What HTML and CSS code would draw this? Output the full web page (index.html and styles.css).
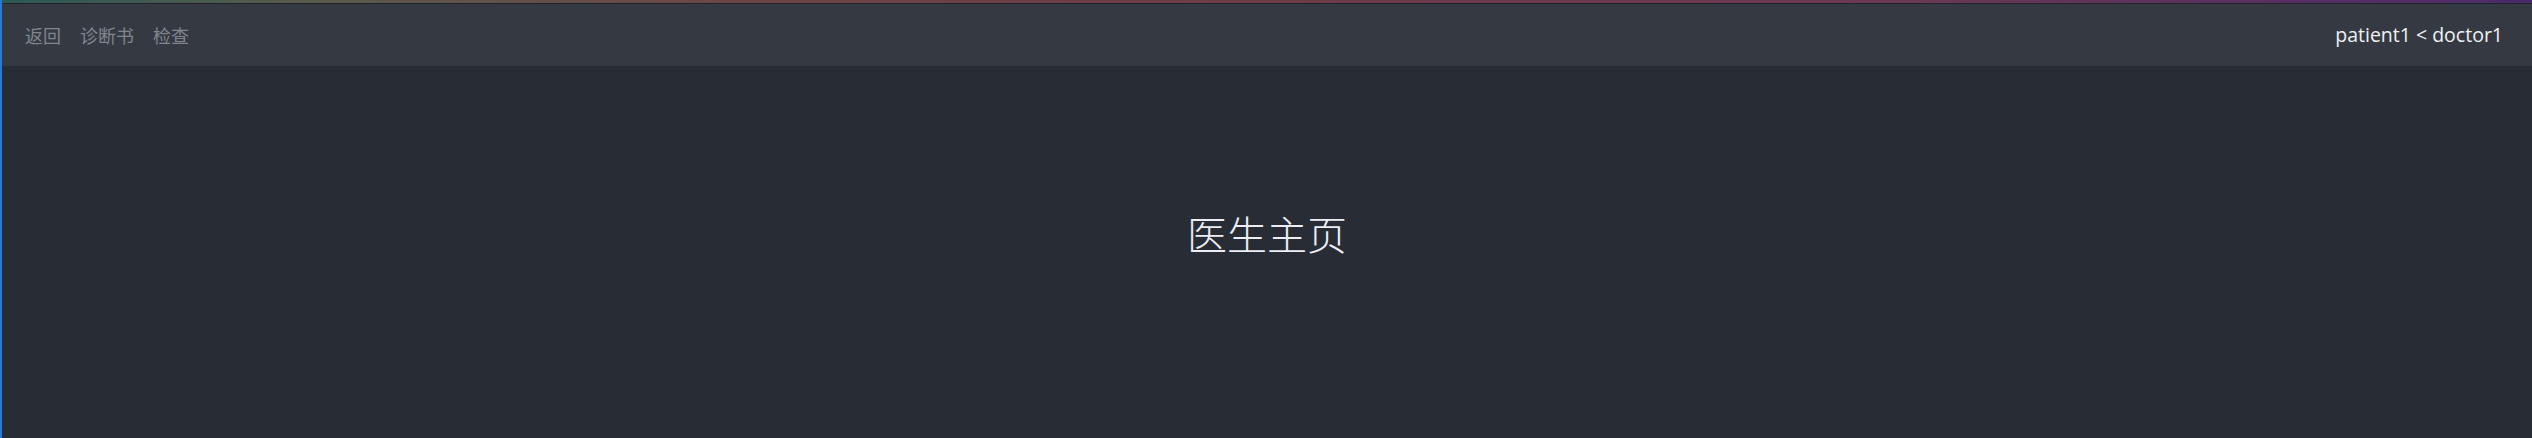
FILE: index.html
```html
<!DOCTYPE html>
<html lang="zh-CN">
<head>
<meta charset="utf-8">
<title>医生主页</title>
<link rel="stylesheet" href="styles.css">
</head>
<body>
<div class="app">
  <div class="topline"></div>
  <div class="divider"></div>
  <nav class="navbar">
    <div class="nav-links">
      <a class="nav-link" href="#">返回</a>
      <a class="nav-link" href="#">诊断书</a>
      <a class="nav-link" href="#">检查</a>
    </div>
    <div class="nav-user">patient1 &lt; doctor1</div>
  </nav>
  <main class="main">
    <h1 class="title">医生主页</h1>
  </main>
</div>
</body>
</html>
```
FILE: styles.css
```css
html, body {
  margin: 0;
  padding: 0;
  height: 100%;
  background: #282c34;
}
.app {
  min-height: 438px;
  height: 100%;
  box-sizing: border-box;
  border-left: 2px solid #2a78d6;
  display: flex;
  flex-direction: column;
  background: #282c34;
}
.topline {
  height: 3px;
  background: linear-gradient(90deg, #2c5954 0%, #585a4c 12%, #6c4448 30%, #6e3b48 50%, #6a3952 75%, #4a2a6a 100%);
}
.divider {
  height: 1px;
  background: #21252b;
}
.navbar {
  height: 62px;
  background: #353a42;
  display: flex;
  align-items: center;
  justify-content: space-between;
  padding: 0 29px 0 23px;
}
.nav-links {
  display: flex;
  gap: 19px;
}
.nav-link {
  color: #80858e;
  text-decoration: none;
  font-family: "Noto Sans CJK SC", sans-serif;
  font-size: 18px;
  line-height: 24px;
}
.nav-user {
  color: #eef0f2;
  font-family: "Open Sans", "Noto Sans", sans-serif;
  font-size: 19.5px;
  line-height: 24px;
}
.main {
  flex: 1;
  display: flex;
  justify-content: center;
  padding-top: 141px;
}
.title {
  margin: 0;
  color: #eceef4;
  font-family: "Noto Sans CJK SC", sans-serif;
  font-weight: 300;
  font-size: 40px;
  line-height: 52px;
  letter-spacing: 0;
}
```
